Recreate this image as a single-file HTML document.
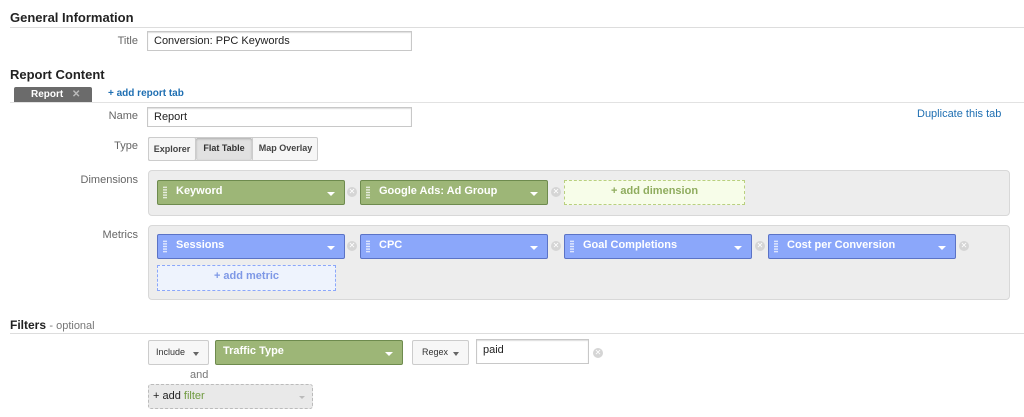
<!DOCTYPE html>
<html><head><meta charset="utf-8"><style>
*{box-sizing:border-box;margin:0;padding:0}
body{width:1024px;height:417px;background:#fff;font-family:"Liberation Sans",Arial,sans-serif;position:relative;overflow:hidden;color:#222}
.a{position:absolute}
.h{font-weight:bold;font-size:13px;color:#222}
.line{height:1px;background:#ddd;left:10px;right:0}
.lbl{font-size:11px;color:#666;text-align:right;width:128px;left:10px}
.inp{border:1px solid #c8c8c8;box-shadow:inset 0 1px 1px #ddd;font-size:11px;padding:3px 6px;background:#fff;color:#222}
.box{background:#ededed;border:1px solid #d8d8d8;border-radius:4px}
.chip{height:25px;border-radius:2px;font-size:11px;font-weight:bold;color:#fff;padding:4px 0 0 18px}
.g{background:#9db677;border:1px solid #6e8b4e}
.b{background:#8ba7fa;border:1px solid #5b73c6}
.dots:before{content:"";position:absolute;left:5px;top:5px;width:4px;height:13px;background-image:radial-gradient(circle,rgba(255,255,255,.8) 0.8px,transparent 1px);background-size:2px 2.6px}
.chip:after{content:"";position:absolute;right:9px;top:11px;border-left:4px solid transparent;border-right:4px solid transparent;border-top:4px solid #fff}
.x{width:10px;height:10px;border-radius:50%;background:#d5d5d5;color:#fff;font-size:8px;line-height:10px;text-align:center}
.btn{border:1px solid #ccc;border-radius:2px;background:#f5f5f5;font-size:9px;font-weight:bold;color:#444;text-align:center}
.dd:after{content:"";position:absolute;right:9px;top:11px;border-left:3px solid transparent;border-right:3px solid transparent;border-top:4px solid #666}
</style></head><body>
<div class="a h" style="left:10px;top:10px">General Information</div>
<div class="a line" style="top:27px"></div>
<div class="a lbl" style="top:35px">Title</div>
<div class="a inp" style="left:147px;top:31px;width:265px;height:20px">Conversion: PPC Keywords</div>

<div class="a h" style="left:10px;top:67px">Report Content</div>
<div class="a" style="left:14px;top:87px;width:78px;height:16px;background:#6b6b6b;border-radius:2px 2px 0 0;color:#fff;font-size:10px;font-weight:bold;padding:2px 0 0 17px">Report <span style="color:#bbb;margin-left:6px">✕</span></div>
<div class="a" style="left:108px;top:88px;font-size:10px;font-weight:bold;color:#1f6fb2">+ add report tab</div>
<div class="a line" style="top:102px;background:#e2e2e2"></div>
<div class="a lbl" style="top:110px">Name</div>
<div class="a inp" style="left:147px;top:107px;width:265px;height:20px">Report</div>
<div class="a" style="left:917px;top:108px;font-size:11px;color:#1f6fb2">Duplicate this tab</div>
<div class="a lbl" style="top:140px">Type</div>
<div class="a" style="left:148px;top:137px;width:170px;height:24px;border:1px solid #ccc;border-radius:2px;background:#f6f6f6"></div>
<div class="a btn" style="left:148px;top:137px;width:48px;height:24px;line-height:22px;border-color:#ccc;background:transparent">Explorer</div>
<div class="a btn" style="left:196px;top:138px;width:56px;height:22px;line-height:21px;background:#e1e1e1;border:none;box-shadow:inset 0 1px 2px #aaa;color:#333">Flat Table</div>
<div class="a btn" style="left:252px;top:137px;width:66px;height:24px;line-height:22px;background:transparent;border-left:1px solid #ccc;border-top:none;border-bottom:none;border-right:none">Map Overlay</div>

<div class="a lbl" style="top:174px">Dimensions</div>
<div class="a box" style="left:148px;top:170px;width:862px;height:46px"></div>
<div class="a chip g dots" style="left:157px;top:180px;width:188px">Keyword</div>
<div class="a x" style="left:347px;top:187px">✕</div>
<div class="a chip g dots" style="left:360px;top:180px;width:188px">Google Ads: Ad Group</div>
<div class="a x" style="left:551px;top:187px">✕</div>
<div class="a" style="left:564px;top:180px;width:181px;height:25px;border:1px dashed #b9d07f;background:#f7fde9;color:#8fac5e;font-size:11px;font-weight:bold;text-align:center;line-height:20px">+ add dimension</div>

<div class="a lbl" style="top:229px">Metrics</div>
<div class="a box" style="left:148px;top:225px;width:862px;height:75px"></div>
<div class="a chip b dots" style="left:157px;top:234px;width:188px">Sessions</div>
<div class="a x" style="left:347px;top:241px">✕</div>
<div class="a chip b dots" style="left:360px;top:234px;width:188px">CPC</div>
<div class="a x" style="left:551px;top:241px">✕</div>
<div class="a chip b dots" style="left:564px;top:234px;width:188px">Goal Completions</div>
<div class="a x" style="left:755px;top:241px">✕</div>
<div class="a chip b dots" style="left:768px;top:234px;width:188px">Cost per Conversion</div>
<div class="a x" style="left:959px;top:241px">✕</div>
<div class="a" style="left:157px;top:265px;width:179px;height:26px;border:1px dashed #8ba7fa;background:#eef3fd;color:#7e98e6;font-size:11px;font-weight:bold;text-align:center;line-height:21px">+ add metric</div>

<div class="a" style="left:10px;top:318px;font-size:12px;font-weight:bold;color:#222">Filters <span style="font-weight:normal;color:#777;font-size:11px">- optional</span></div>
<div class="a line" style="top:333px"></div>
<div class="a btn dd" style="left:148px;top:340px;width:61px;height:25px;line-height:23px;text-align:left;padding-left:7px;font-weight:normal;color:#333;background:#f7f7f7">Include</div>
<div class="a chip g" style="left:215px;top:340px;width:188px;padding-left:7px;padding-top:4px;font-size:11px">Traffic Type</div>
<div class="a btn dd" style="left:412px;top:340px;width:57px;height:25px;line-height:23px;text-align:left;padding-left:9px;font-weight:normal;color:#333;background:#f7f7f7">Regex</div>
<div class="a inp" style="left:476px;top:339px;width:113px;height:25px;padding-top:4px">paid</div>
<div class="a x" style="left:593px;top:348px">✕</div>
<div class="a" style="left:190px;top:369px;font-size:11px;color:#777">and</div>
<div class="a" style="left:148px;top:384px;width:165px;height:25px;border:1px dashed #bbb;border-radius:3px;background:#e9e9e9;font-size:11px;padding:5px 0 0 4px;color:#222">+ add <span style="color:#6f9a3f">filter</span><span style="position:absolute;right:7px;top:11px;border-left:3px solid transparent;border-right:3px solid transparent;border-top:3px solid #bbb"></span></div>
</body></html>
